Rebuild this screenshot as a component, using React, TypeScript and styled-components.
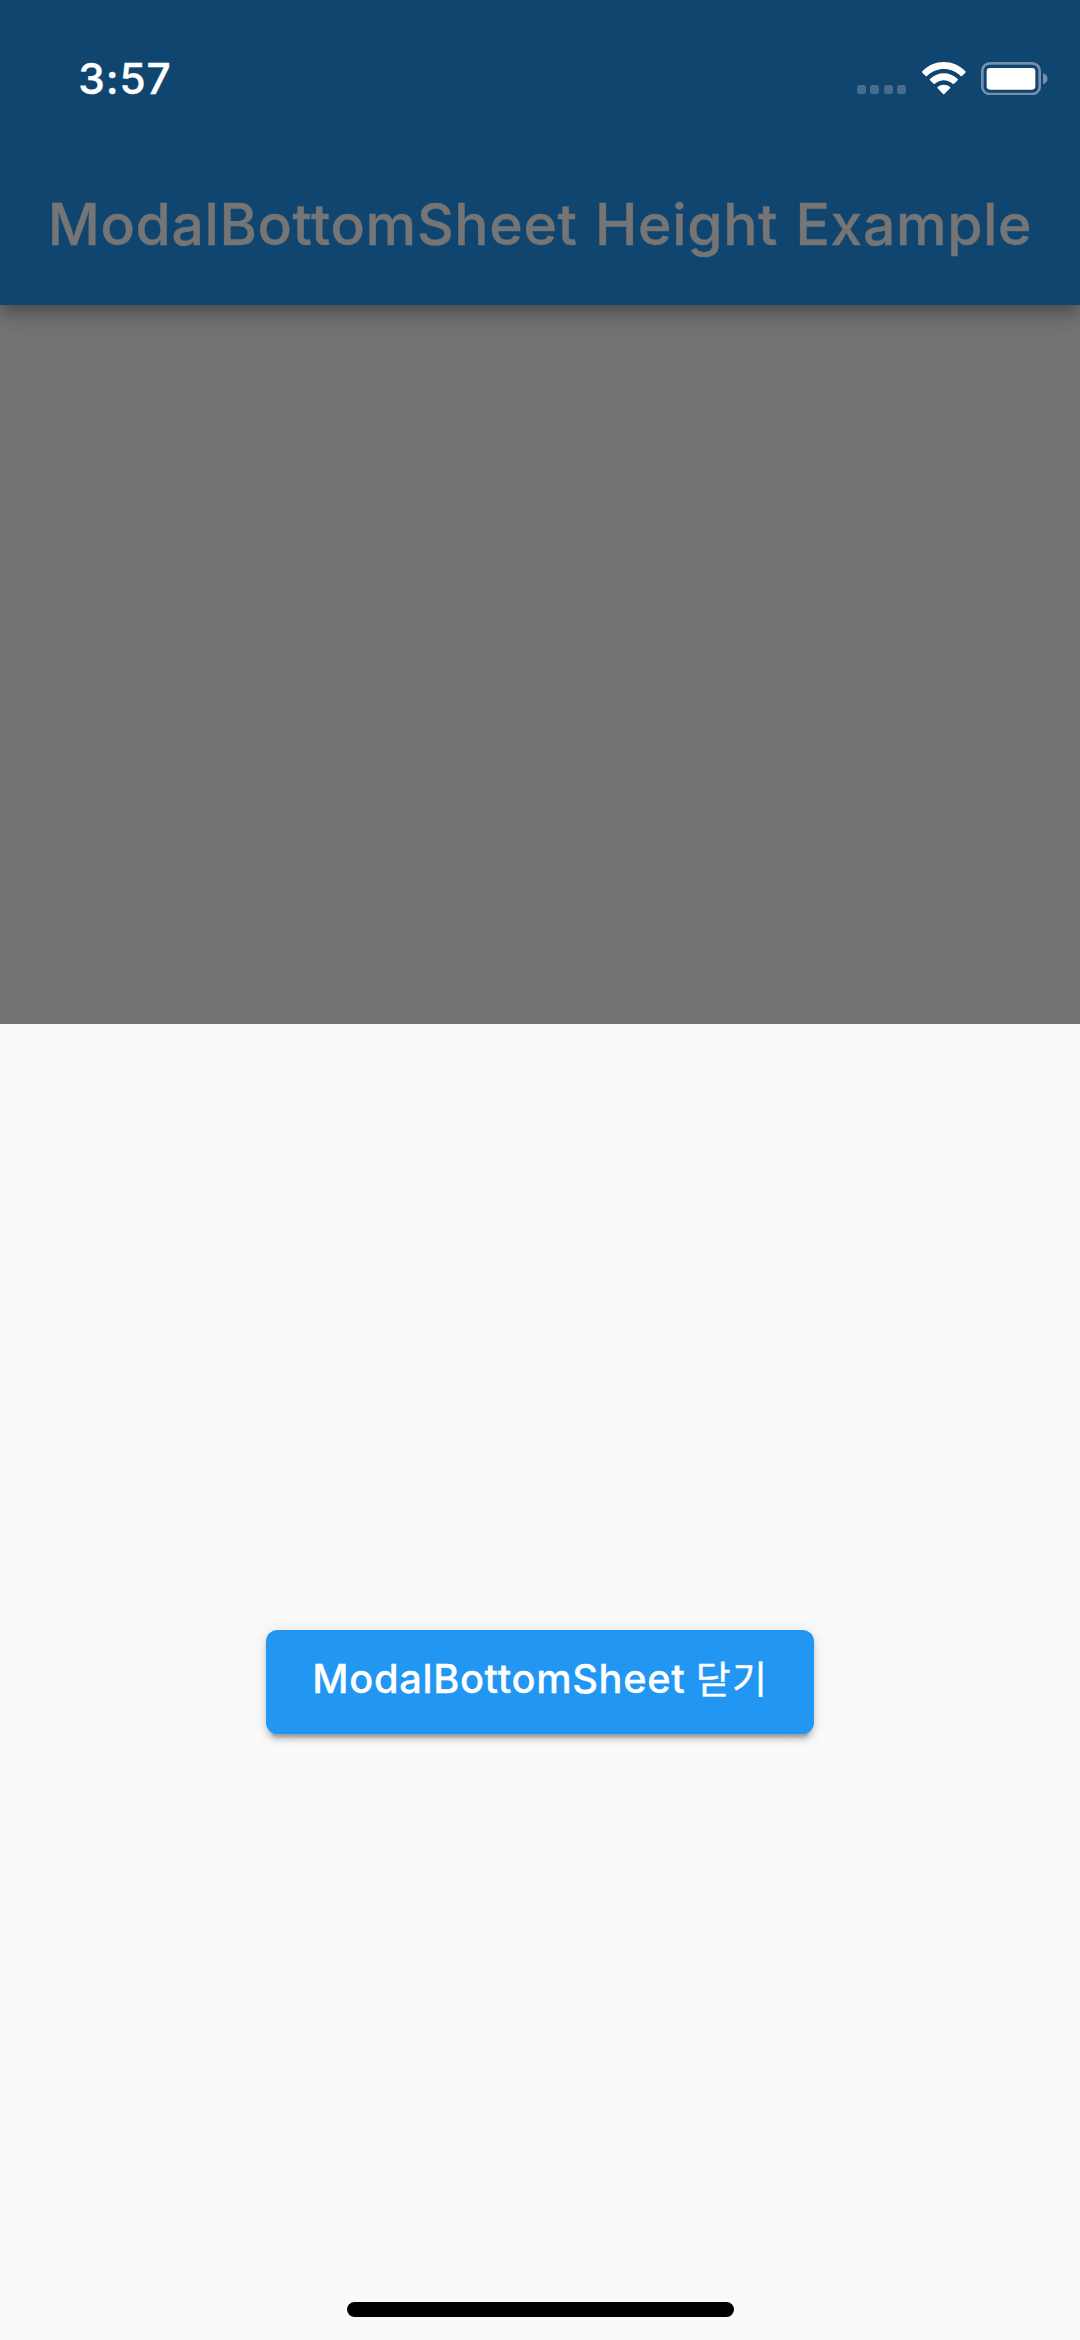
import React from "react";
import styled, { createGlobalStyle } from "styled-components";

const GlobalStyle = createGlobalStyle`
  *, *::before, *::after { box-sizing: border-box; }
  html, body { margin: 0; padding: 0; }
  body { background: #737373; font-family: Inter, "Noto Sans CJK KR", sans-serif; }
`;

const Screen = styled.main`
  width: 1080px;
  height: 2340px;
  display: flex;
  flex-direction: column;
  overflow: hidden;
  background: #737373;
`;

const AppBar = styled.header`
  flex: none;
  height: 305.3px;
  display: flex;
  flex-direction: column;
  background: #10456f;
  box-shadow:
    0 5.8px 11.5px -2.9px rgba(0, 0, 0, 0.2),
    0 11.5px 14.4px 0 rgba(0, 0, 0, 0.14),
    0 2.9px 28.8px 0 rgba(0, 0, 0, 0.12);
`;

const StatusBar = styled.div`
  height: 148px;
  display: flex;
  align-items: flex-start;
  justify-content: space-between;
  padding: 54px 32px 0 78.2px;
`;

const Clock = styled.time`
  font-size: 42.4px;
  line-height: 50px;
  font-weight: 500;
  letter-spacing: 0.9px;
  -webkit-text-stroke: 0.4px #fff;
  color: #fff;
`;

const StatusIcons = styled.div`
  display: flex;
  align-items: flex-end;
  padding-top: 8px;
`;

const Signal = styled.div`
  display: flex;
  gap: 4.5px;
  margin: 0 16px 1px 0;
`;

const SignalDot = styled.span`
  width: 9px;
  height: 9px;
  border-radius: 2.8px;
  background: #466d8e;
`;

const WifiIcon = styled.svg`
  display: block;
  width: 44px;
  height: 33px;
  margin-right: 15px;
`;

const BatteryIcon = styled.svg`
  display: block;
  width: 67px;
  height: 33px;
`;

const TitleRow = styled.div`
  flex: 1;
  display: flex;
  justify-content: center;
  padding-top: 42px;
`;

const Title = styled.h1`
  margin: 0;
  font-size: 57px;
  line-height: 70px;
  font-weight: 500;
  letter-spacing: 0.65px;
  word-spacing: 1.5px;
  white-space: nowrap;
  -webkit-text-stroke: 0.4px #757575;
  color: #757575;
`;

const Backdrop = styled.div`
  flex: none;
  height: 718.3px;
`;

const Sheet = styled.section`
  flex: 1;
  display: flex;
  flex-direction: column;
  align-items: center;
  background: #fafafa;
`;

const SheetBody = styled.div`
  flex: 1;
  display: flex;
  align-items: center;
  justify-content: center;
  padding-top: 38px;
`;

const CloseButton = styled.button`
  width: 547.4px;
  height: 104px;
  padding: 0 0 5.6px 46px;
  border: 0;
  border-radius: 11.5px;
  display: flex;
  align-items: center;
  justify-content: flex-start;
  font-family: inherit;
  font-size: 39.8px;
  line-height: 48px;
  font-weight: 500;
  letter-spacing: 0.65px;
  word-spacing: -1px;
  white-space: nowrap;
  -webkit-text-stroke: 0.3px #fff;
  color: #fff;
  background: #2196f3;
  box-shadow:
    0 8.6px 2.9px -5.8px rgba(0, 0, 0, 0.2),
    0 5.8px 5.8px 0 rgba(0, 0, 0, 0.14),
    0 2.9px 14.4px 0 rgba(0, 0, 0, 0.12);
`;

const Korean = styled.span`
  font-family: "Noto Sans CJK KR", sans-serif;
  font-size: 38px;
  line-height: 1;
  font-weight: 400;
  letter-spacing: 1.3px;
  -webkit-text-stroke: 0.4px #fff;
`;

const HomeIndicator = styled.div`
  flex: none;
  width: 386.5px;
  height: 15px;
  margin: 0 0 23px 1px;
  border-radius: 8px;
  background: #000;
`;

export default function App() {
  return (
    <>
      <GlobalStyle />
      <Screen>
        <AppBar>
          <StatusBar>
            <Clock>3:57</Clock>
            <StatusIcons>
              <Signal>
                {[0, 1, 2, 3].map((dot) => (
                  <SignalDot key={dot} />
                ))}
              </Signal>
              <WifiIcon viewBox="246 66 132 99" fill="#fff">
                <path d="M247 94C283 57 340 57 376 94Q378 96 376 98L366 108Q364 110 362 108C334 80 289 80 261 108Q259 110 257 108L247 98Q245 96 247 94Z" />
                <path d="M270 117C293 94 330 94 353 117Q355 119 353 121L342 131Q340 133 338 131C323 117 300 117 285 131Q283 133 281 131L270 121Q268 119 270 117Z" />
                <path d="M293 141C303 132 320 132 330 141Q332 143 330 145L313 162Q311 163 309 162L293 145Q291 143 293 141Z" />
              </WifiIcon>
              <BatteryIcon viewBox="423 66 201 99">
                <rect x="427" y="70" width="172" height="92" rx="22" fill="none" stroke="#7490ab" strokeWidth="8" />
                <rect x="440" y="84" width="146" height="65" rx="10" fill="#fff" />
                <path d="M609 100C627 105 627 128 609 133Z" fill="#7490ab" />
              </BatteryIcon>
            </StatusIcons>
          </StatusBar>
          <TitleRow>
            <Title>ModalBottomSheet Height Example</Title>
          </TitleRow>
        </AppBar>
        <Backdrop />
        <Sheet>
          <SheetBody>
            <CloseButton type="button">
              <span>
                ModalBottomSheet <Korean lang="ko">닫기</Korean>
              </span>
            </CloseButton>
          </SheetBody>
          <HomeIndicator />
        </Sheet>
      </Screen>
    </>
  );
}
